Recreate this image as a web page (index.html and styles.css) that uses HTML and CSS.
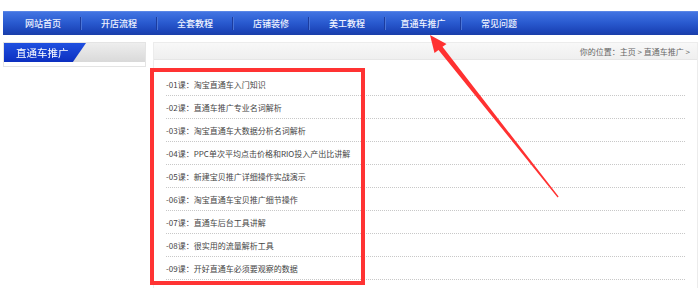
FILE: index.html
```html
<!DOCTYPE html>
<html lang="zh-CN">
<head>
<meta charset="utf-8">
<title>直通车推广</title>
<link rel="stylesheet" href="styles.css">
</head>
<body>
<div class="page">
  <nav class="nav">
    <a class="nav-item">网站首页</a>
    <a class="nav-item">开店流程</a>
    <a class="nav-item">全套教程</a>
    <a class="nav-item">店铺装修</a>
    <a class="nav-item">美工教程</a>
    <a class="nav-item">直通车推广</a>
    <a class="nav-item last">常见问题</a>
  </nav>
  <div class="content">
    <aside class="side">
      <div class="side-head"><span class="side-tab">直通车推广</span></div>
    </aside>
    <main class="main">
      <div class="main-head">你的位置：主页 &gt; 直通车推广 &gt;</div>
      <ul class="list">
        <li>-01课：淘宝直通车入门知识</li>
        <li>-02课：直通车推广专业名词解析</li>
        <li>-03课：淘宝直通车大数据分析名词解析</li>
        <li>-04课：PPC单次平均点击价格和RIO投入产出比讲解</li>
        <li>-05课：新建宝贝推广详细操作实战演示</li>
        <li>-06课：淘宝直通车宝贝推广细节操作</li>
        <li>-07课：直通车后台工具讲解</li>
        <li>-08课：很实用的流量解析工具</li>
        <li>-09课：开好直通车必须要观察的数据</li>
      </ul>
    </main>
  </div>
  <div class="mark-box"></div>
  <svg class="mark-arrow" width="700" height="288" viewBox="0 0 700 288">
    <polygon points="430,35 446.5,44 442.5,46.8 558.6,196.6 557.6,197.4 438.5,50 434.5,53" fill="#ff3131"/>
  </svg>
</div>
</body>
</html>
```

FILE: styles.css
```css
html, body {
  margin: 0;
  padding: 0;
  background: #fff;
}
body {
  font-family: "Noto Sans CJK SC", "Noto Sans", sans-serif;
  width: 700px;
  height: 288px;
  overflow: hidden;
}
.page {
  position: relative;
  padding: 11px 2px 0 3px;
}
.nav {
  display: flex;
  height: 24px;
  padding-left: 2px;
  background: linear-gradient(#4274e2 0%, #2a5bd0 45%, #1d47bb 80%, #1a3ea9 100%);
  border-top: 1px solid #5a86e6;
  box-sizing: border-box;
}
.nav-item {
  position: relative;
  width: 76px;
  display: flex;
  align-items: center;
  justify-content: center;
  color: #eef2ff;
  font-size: 9px;
  font-weight: 500;
  text-decoration: none;
}
.nav-item::after {
  content: "";
  position: absolute;
  right: 0;
  top: 5px;
  height: 13px;
  width: 1px;
  background: #1c3c9e;
  box-shadow: 1px 0 0 #4a74d8;
}
.nav-item.last::after {
  display: none;
}
.content {
  display: flex;
  gap: 7px;
  margin-top: 7px;
  align-items: flex-start;
}
.side {
  width: 143px;
  height: 25px;
  border: 1px solid #e4e4e4;
  box-sizing: border-box;
  background: #fff;
}
.side-head {
  height: 19px;
  background: linear-gradient(#eeeeee, #d9d9d9);
  display: flex;
}
.side-tab {
  display: flex;
  align-items: center;
  width: 82px;
  padding-left: 12px;
  box-sizing: border-box;
  color: #fff;
  font-size: 10.5px;
  background: linear-gradient(#2050e0, #0c2fc0);
  clip-path: polygon(0 0, 100% 0, 84% 100%, 0 100%);
  filter: drop-shadow(2px 0 0 #fff);
}
.main {
  flex: 1;
  height: 260px;
  border-left: 1px solid #ececec;
  border-right: 1px solid #ececec;
  box-sizing: border-box;
}
.main-head {
  height: 18px;
  background: linear-gradient(#f8f8f8, #efefef);
  border-top: 1px solid #ececec;
  border-bottom: 1px solid #e6e6e6;
  box-sizing: border-box;
  display: flex;
  align-items: center;
  justify-content: flex-end;
  padding-right: 7px;
  color: #666;
  font-size: 8px;
}
.list {
  list-style: none;
  margin: 13px 12px 0 12px;
  padding: 0;
}
.list li {
  height: 23px;
  box-sizing: border-box;
  border-bottom: 1px dotted #c8c8c8;
  display: flex;
  align-items: center;
  padding-top: 1px;
  color: #444;
  font-size: 8px;
}
.mark-box {
  position: absolute;
  left: 150px;
  top: 68px;
  width: 215px;
  height: 217px;
  border: 4px solid #ff3333;
  box-sizing: border-box;
}
.mark-arrow {
  position: absolute;
  left: 0;
  top: 0;
}
```
